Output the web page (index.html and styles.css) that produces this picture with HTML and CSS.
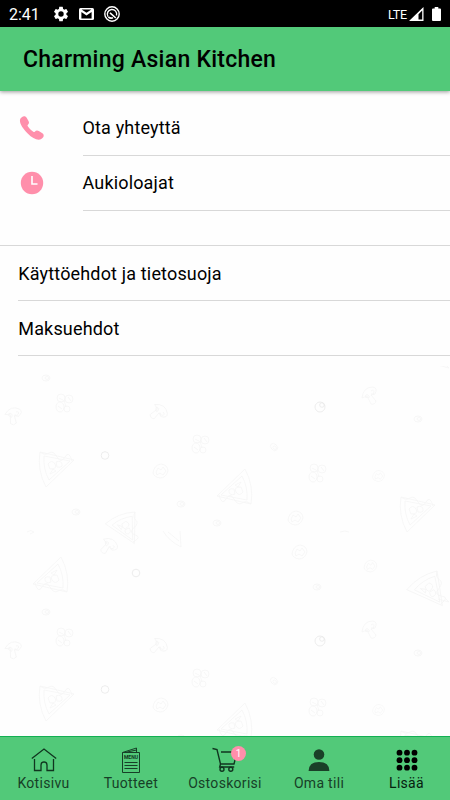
FILE: index.html
```html
<!DOCTYPE html>
<html lang="fi">
<head>
<meta charset="utf-8">
<title>Charming Asian Kitchen</title>
<link rel="stylesheet" href="styles.css">
</head>
<body>
<div class="status">
  <span class="time">2:41</span>
  <svg class="gear" width="18" height="18" viewBox="0 0 24 24"><path fill="#fff" d="M19.14 12.94c.04-.3.06-.61.06-.94 0-.32-.02-.64-.07-.94l2.03-1.58a.49.49 0 0 0 .12-.61l-1.92-3.32a.49.49 0 0 0-.59-.22l-2.39.96c-.5-.38-1.03-.7-1.62-.94l-.36-2.54a.48.48 0 0 0-.48-.41h-3.84c-.24 0-.43.17-.47.41l-.36 2.54c-.59.24-1.13.57-1.62.94l-2.39-.96a.48.48 0 0 0-.59.22L2.74 8.87c-.12.21-.08.47.12.61l2.03 1.58c-.05.3-.09.63-.09.94s.02.64.07.94l-2.03 1.58a.49.49 0 0 0-.12.61l1.92 3.32c.12.22.37.29.59.22l2.39-.96c.5.38 1.03.7 1.62.94l.36 2.54c.05.24.24.41.48.41h3.84c.24 0 .44-.17.47-.41l.36-2.54c.59-.24 1.13-.56 1.62-.94l2.39.96c.22.08.47 0 .59-.22l1.92-3.32a.48.48 0 0 0-.12-.61zM12 15.6a3.6 3.6 0 1 1 0-7.2 3.6 3.6 0 0 1 0 7.2z"/></svg>
  <svg class="mail" width="15" height="12" viewBox="0 0 15 12"><rect width="15" height="12" rx="1.5" fill="#fff"/><path d="M2.4 10.600V4l5.100 3.500L12.600 4v6.600zM2.600 1.400h9.800L7.500 4.800z" fill="#000"/></svg>
  <svg class="ring" width="16" height="16" viewBox="0 0 16 16" fill="none" stroke="#fff"><circle cx="8" cy="8" r="7.200" stroke-width="1.400"/><path d="M4 10.600A4.700 4.700 0 1 1 12.500 9.500" stroke-width="1.400"/><path d="M6 6.800l5.800 5.200M4.300 11q2.300 1.800 4.700.800" stroke-width="1.600"/></svg>
  <span class="lte">LTE</span>
  <svg class="signal" width="15" height="14" viewBox="0 0 15 14"><path fill="#fff" fill-rule="evenodd" d="M0 14 14.500 0v14zM9.500 12.500h3.700V3.600L9.500 7.200z"/></svg>
  <svg class="battery" width="9" height="14" viewBox="0 0 9 14"><path fill="#fff" d="M2.700 0h3.600v1.400H8q1 0 1 1V13q0 1-1 1H1q-1 0-1-1V2.400q0-1 1-1h1.700z"/></svg>
</div>
<header class="bar"><h1>Charming Asian Kitchen</h1></header>
<main class="content">
  <svg class="doodles" width="450" height="370" viewBox="0 366 450 370">
    <defs>
      <g id="slice"><path d="M0 0Q-3 18 6 35L34 8Q18 4 0 0zM4 4Q3 17 9 28L30 9zM0 0q5 4 9 1t8 4 8 0 7 4M8 12q4-5 7 0t-5 5zM16 10q5-2 6 2t-5 3zM10 22l3-5 3 2z"/></g>
      <g id="cluster"><circle cx="-3" cy="-5" r="4"/><circle cx="5" cy="-4" r="4"/><ellipse cx="-4" cy="4" rx="4" ry="5"/><circle cx="3" cy="6" r="3"/><path d="M-5-5l4 2M4-6l3 4M-6 3l4 3M0-3l2 7"/></g>
      <g id="mushroom"><path d="M-8 2Q-7-9 3-9q5 1 2 7L1-1l5 6q-1 4-5 3l-4-8zM-5 0q2-3 4 0t-4 1M1-5q3-2 3 1T1-2"/></g>
      <g id="tomato"><path d="M-7 2Q-6-6 1-7q7 1 7 7-2 7-8 7-6-1-7-5z"/><path d="M-4 1l2-4 3 2 2-3 3 4-3 4-3-2-3 2z"/></g>
      <g id="olive"><ellipse rx="4" ry="3"/><ellipse cx="1" rx="2" ry="1.400"/></g>
      <g id="motif">
        <use href="#olive" x="46" y="378"/><use href="#cluster" x="64" y="403"/>
        <use href="#mushroom" transform="translate(13 416) rotate(25)"/>
        <use href="#mushroom" transform="translate(158 412) rotate(80)"/>
        <use href="#cluster" x="200" y="444"/><use href="#slice" x="40" y="452"/>
        <g class="dark"><circle cx="105" cy="455.500" r="3.800"/></g><use href="#tomato" x="160" y="471"/>
        <g class="dark"><circle cx="320" cy="407" r="5"/><circle cx="322" cy="405" r="2.300"/></g>
        <use href="#mushroom" x="370" y="396"/><use href="#olive" x="418" y="419"/>
        <use href="#olive" transform="translate(274 447) rotate(45)"/>
        <use href="#slice" transform="translate(251 504) rotate(180)"/>
        <use href="#cluster" x="317" y="473"/><use href="#tomato" transform="translate(378 476) scale(.8)"/>
        <use href="#slice" x="401" y="497"/><use href="#tomato" x="295" y="518"/>
        <use href="#olive" x="181" y="504"/><use href="#olive" x="76" y="512"/><use href="#olive" x="217" y="523"/>
        <use href="#slice" transform="translate(135 512) rotate(78) scale(.9)"/>
        <path d="M27 532q4-3 7 0l-4 2M163 531q6 10 18 16l-1-16M168 532l11 9M340 532q5-2 9 0"/>
        <use href="#mushroom" transform="translate(108 546) rotate(70)"/><use href="#tomato" x="299" y="552"/>
        <use href="#tomato" transform="translate(370 566) scale(.85)"/>
        <g class="dark"><circle cx="136" cy="573" r="3.800"/></g><use href="#olive" x="317" y="587"/>
        <use href="#slice" transform="translate(67 592) rotate(180)"/>
        <use href="#slice" transform="translate(437 571) rotate(68)"/>
        <path d="M438 365l11 3-4-4"/>
      </g>
    </defs>
    <use href="#motif"/><use href="#motif" y="234"/>
  </svg>
  <section class="group contact">
    <a class="row"><svg class="icon" width="26" height="26" viewBox="0 0 26 26"><path fill="#ff8fab" d="M1.500 3.600C3 .8 6 .3 7.500 2.500l2 3.400c.9 1.700.5 2.800-.6 3.900-.5.500-.5.900-.1 1.500 1.400 2.200 3.200 4 5.500 5.500.6.400 1 .4 1.500-.1 1.100-1.200 2.500-1.500 4-.6l3.600 2.200c2.100 1.400 1.500 4.100-.8 5.500-3.300 2.300-8.500.2-13.900-5.300C3 12.800-.5 7 1.500 3.600z"/></svg><span class="label">Ota yhteyttä</span></a>
    <a class="row"><svg class="icon" width="26" height="26" viewBox="0 0 26 26"><circle cx="13" cy="13" r="11.200" fill="#ff8fab"/><path d="M13 6v8h5.500" fill="none" stroke="#fff" stroke-width="1.600"/></svg><span class="label">Aukioloajat</span></a>
  </section>
  <section class="group legal">
    <a class="row"><span class="label">Käyttöehdot ja tietosuoja</span></a>
    <a class="row"><span class="label">Maksuehdot</span></a>
  </section>
</main>
<nav class="tabs">
  <a class="tab"><svg width="26" height="26" viewBox="0 0 26 26" fill="none" stroke="#10351f" stroke-width="1.300"><path d="M.8 11.500 13 2l12.200 9.500M3.500 12v11.500h6.500V18q0-3 3-3t3 3v5.500h6.500V12"/></svg><span>Kotisivu</span></a>
  <a class="tab"><svg width="26" height="26" viewBox="0 0 26 26" fill="none" stroke="#173f27" stroke-width="1"><path d="M4.500 5.500h17v20h-17zM4.500 5.500 18.500 1v4.500M7 5.500l11.500-2.500M6.500 15.500h13M6.500 18.500h13M6.500 21.500h13"/><text x="13" y="11.500" text-anchor="middle" class="menu-text">MENU</text></svg><span>Tuotteet</span></a>
  <a class="tab"><span class="cart"><svg width="26" height="26" viewBox="0 0 26 26" fill="none" stroke="#10351f" stroke-width="1.400"><path d="M.5 1.500l4.500 1 3.500 14.500h13.500l3-12H9M8.500 17l-.8 3h14.500"/><circle cx="10" cy="22.300" r="2"/><circle cx="18.800" cy="22.300" r="2"/></svg><span class="badge">1</span></span><span>Ostoskorisi</span></a>
  <a class="tab"><svg width="26" height="26" viewBox="0 0 26 26" fill="#1a4028"><circle cx="13" cy="7.500" r="5.300"/><path d="M2.600 24q0-9 10.400-9t10.400 9z"/></svg><span>Oma tili</span></a>
  <a class="tab active"><svg width="26" height="26" viewBox="0 0 26 26"><g fill="#000"><circle cx="5.500" cy="5.700" r="2.900"/><circle cx="13" cy="5.700" r="2.900"/><circle cx="20.500" cy="5.700" r="2.900"/><circle cx="5.500" cy="13.200" r="2.900"/><circle cx="13" cy="13.200" r="2.900"/><circle cx="20.500" cy="13.200" r="2.900"/><circle cx="5.500" cy="20.700" r="2.900"/><circle cx="13" cy="20.700" r="2.900"/><circle cx="20.500" cy="20.700" r="2.900"/></g></svg><span>Lisää</span></a>
</nav>
</body>
</html>
```
FILE: styles.css
```css
* { box-sizing: border-box; }
body {
  margin: 0;
  height: 800px;
  display: flex;
  flex-direction: column;
  overflow: hidden;
  background: #fefefe;
  color: #000;
  font-family: Roboto, "Liberation Sans", sans-serif;
}
svg { display: block; flex: none; }
.status {
  height: 27px;
  flex: none;
  display: flex;
  align-items: center;
  padding: 1px 9px 0;
  background: #000;
  color: #fff;
}
.time { width: 43px; font-size: 16px; line-height: 26px; padding-top: 1px; }
.gear { margin-right: 9px; }
.mail { margin-right: 10px; }
.lte { margin-left: auto; margin-right: 2px; font-size: 12.5px; letter-spacing: -.2px; }
.signal { margin-right: 8px; }
.bar {
  height: 64px;
  flex: none;
  display: flex;
  align-items: center;
  padding: 2px 0 0 23px;
  background: #52c979;
  box-shadow: 0 1px 4px rgba(0, 0, 0, .4);
  z-index: 1;
}
h1 { margin: 0; font-size: 23px; font-weight: 500; letter-spacing: .25px; line-height: 30px; }
.content { flex: 1; min-height: 0; position: relative; padding-top: 10px; }
.doodles {
  position: absolute;
  left: 0;
  bottom: 0;
  fill: none;
  stroke: #f5f5f5;
  stroke-width: .8;
}
.dark { stroke: #e8e8e8; }
.group { position: relative; }
.row { display: flex; align-items: center; height: 55px; }
.label {
  flex: 1;
  height: 55px;
  line-height: 55px;
  border-bottom: 1px solid #d8d8d8;
  font-size: 18px;
  letter-spacing: .16px;
}
.contact .icon { margin-left: 19px; margin-right: 37.5px; margin-bottom: 1px; }
.legal { margin-top: 34px; border-top: 1px solid #d8d8d8; }
.contact .label { line-height: 54px; }
.legal .label { margin-left: 18.3px; }
.tabs {
  height: 64px;
  flex: none;
  display: grid;
  grid-template-columns: 87px 88px 100px 88px 87px;
  background: #52c979;
  border-top: 1px solid #12b052;
  z-index: 1;
}
.tab {
  display: flex;
  flex-direction: column;
  align-items: center;
  padding-top: 10px;
  font-size: 14px;
  letter-spacing: .3px;
  line-height: 20px;
  color: #173f27;
}
.tab.active { color: #06200f; }
.cart { position: relative; }
.badge {
  position: absolute;
  left: 19px;
  top: -1px;
  width: 15px;
  height: 15px;
  border-radius: 50%;
  background: #ff8fab;
  color: #fff;
  font-size: 10px;
  line-height: 15px;
  letter-spacing: 0;
  text-align: center;
}
.menu-text { font: 700 5px Roboto, sans-serif; letter-spacing: 0; fill: #10351f; stroke: none; }
```
